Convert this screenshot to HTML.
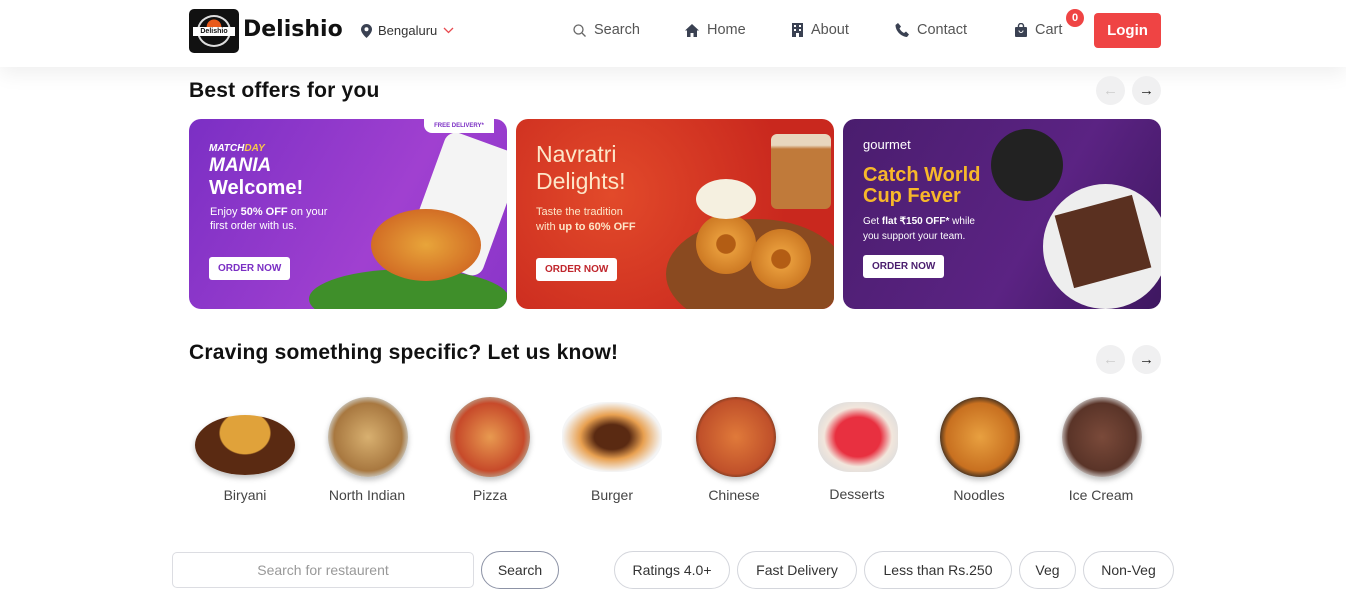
<!DOCTYPE html>
<html><head><meta charset="utf-8"><style>
*{margin:0;padding:0;box-sizing:border-box}
body{width:1346px;height:612px;overflow:hidden;background:#fff;font-family:"Liberation Sans",sans-serif;color:#111;position:relative}
.hdr{position:absolute;left:0;top:0;width:1346px;height:67px;background:#fff;box-shadow:0 6px 20px rgba(0,0,0,.07)}
.abs{position:absolute}
.nav{position:absolute;top:22px;font-size:14.5px;color:#555;display:flex;align-items:center;gap:8px}
.h2{position:absolute;font-size:21px;font-weight:bold;color:#111;letter-spacing:.2px}
.arr{position:absolute;width:29px;height:29px;border-radius:50%;background:#f0f0f1;text-align:center;line-height:29px;font-size:15px}
.ban{position:absolute;top:119px;width:318px;height:190px;border-radius:12px;overflow:hidden;color:#fff}
.btn{position:absolute;background:#fff;color:#c0262d;font-size:10px;font-weight:bold;padding:6px 9px;border-radius:3px}
.food{position:absolute;top:397px;width:80px;height:80px;border-radius:50%;box-shadow:0 3px 6px rgba(0,0,0,.25)}
.lab{position:absolute;top:487px;width:120px;text-align:center;font-size:14px;color:#444}
.pill{position:absolute;top:551px;height:38px;border:1px solid #d4d6dc;border-radius:19px;font-size:14px;color:#333;text-align:center;line-height:36px}
</style></head><body>
<div class="hdr"></div>
<div class="abs" style="left:189px;top:9px;width:50px;height:44px;background:#111;border-radius:5px"></div>
<div class="abs" style="left:197px;top:15px;width:34px;height:32px;border-radius:50%;border:2px solid #ddd;background:radial-gradient(circle at 50% 35%,#e85a1c 0 30%,#111 32%)"></div>
<div class="abs" style="left:193px;top:27px;width:42px;height:9px;background:#fff;color:#111;font-size:7px;font-weight:bold;text-align:center;line-height:9px">Delishio</div>
<div class="abs" style="left:243px;top:17px;font-size:22px;font-weight:bold;color:#111;font-family:'DejaVu Sans',sans-serif">Delishio</div>
<svg class="abs" style="left:361px;top:24px" width="11" height="14" viewBox="0 0 11 14"><path d="M5.5 0C2.5 0 0 2.4 0 5.4 0 9.3 5.5 14 5.5 14S11 9.3 11 5.4C11 2.4 8.5 0 5.5 0z" fill="#3a4152"/><circle cx="5.5" cy="5.3" r="2" fill="#fff"/></svg>
<div class="abs" style="left:378px;top:23px;font-size:13px;color:#333">Bengaluru</div>
<svg class="abs" style="left:443px;top:27px" width="11" height="7"><path d="M1 1l4.5 4.5L10 1" stroke="#e84a4f" fill="none" stroke-width="1.3"/></svg>
<div class="nav" style="left:573px"><svg width="13" height="13"><circle cx="5.5" cy="5.5" r="4.5" stroke="#666" fill="none" stroke-width="1.3"/><path d="M9 9l3.5 3.5" stroke="#666" stroke-width="1.3"/></svg>Search</div>
<div class="nav" style="left:685px"><svg width="14" height="13"><path d="M7 0L0 6.5h2V13h3.5V9h3v4H12V6.5h2z" fill="#3a4152"/></svg>Home</div>
<div class="nav" style="left:792px"><svg width="11" height="14"><rect x="0" y="0" width="11" height="14" fill="#3a4152"/><rect x="2" y="2" width="2" height="2" fill="#fff"/><rect x="7" y="2" width="2" height="2" fill="#fff"/><rect x="2" y="6" width="2" height="2" fill="#fff"/><rect x="7" y="6" width="2" height="2" fill="#fff"/><rect x="4" y="10" width="3" height="4" fill="#fff"/></svg>About</div>
<div class="nav" style="left:895px"><svg width="14" height="14"><path d="M3 0l3 3.5-1.5 2c1 2 2.5 3.5 4.5 4.5l2-1.5 3 3-2 2.5C6 13.5.5 8 .5 2z" fill="#3a4152"/></svg>Contact</div>
<div class="nav" style="left:1015px"><svg width="12" height="14"><path d="M3.5 4V3a2.5 2.5 0 015 0v1" stroke="#3a4152" fill="none" stroke-width="1.4"/><rect x="0" y="4" width="12" height="10" rx="1" fill="#3a4152"/><path d="M4 7.5a2 2 0 004 0" stroke="#fff" fill="none"/></svg>Cart</div>
<div class="abs" style="left:1066px;top:9px;width:18px;height:18px;border-radius:50%;background:#ef4444;color:#fff;font-size:11px;font-weight:bold;text-align:center;line-height:18px">0</div>
<div class="abs" style="left:1094px;top:13px;width:67px;height:35px;border-radius:4px;background:#ef4444;color:#fff;font-size:15px;font-weight:bold;text-align:center;line-height:35px">Login</div>

<div class="h2" style="left:189px;top:79px">Best offers for you</div>
<div class="arr" style="left:1096px;top:76px;color:#ccc">←</div>
<div class="arr" style="left:1132px;top:76px;color:#222">→</div>

<div class="ban" style="left:189px;background:linear-gradient(120deg,#7b2fc4,#a040d0 60%,#8a35c9)">
 <div class="abs" style="left:20px;top:18px;font-size:19px;font-weight:bold;font-style:italic;line-height:17px"><span style="font-size:10px">MATCH<span style="color:#f7c948">DAY</span></span><br>MANIA</div>
 <div class="abs" style="left:20px;top:58px;font-size:20px;font-weight:bold">Welcome!</div>
 <div class="abs" style="left:21px;top:86px;font-size:11px;line-height:14px">Enjoy <b>50% OFF</b> on your<br>first order with us.</div>
 <div class="btn" style="left:20px;top:138px;color:#7b2fc4">ORDER NOW</div>
 <div class="abs" style="left:120px;top:150px;width:200px;height:60px;border-radius:50%;background:#3f8f2a"></div>
 <div class="abs" style="left:235px;top:20px;width:80px;height:130px;border-radius:12px;background:#f4f4f4;transform:rotate(20deg)"></div>
 <div class="abs" style="left:182px;top:90px;width:110px;height:72px;border-radius:50%;background:radial-gradient(#e8a53a,#c9561c)"></div>
 <div class="abs" style="left:235px;top:0;width:70px;height:14px;background:#fff;color:#7b2fc4;font-size:6px;font-weight:bold;border-radius:0 0 0 8px;text-align:center;line-height:14px">FREE DELIVERY*</div>
</div>
<div class="ban" style="left:516px;background:radial-gradient(circle at 30% 40%,#e24a2a,#c9281e 70%)">
 <div class="abs" style="left:20px;top:22px;font-size:23px;line-height:27px;color:#fde6c8">Navratri<br>Delights!</div>
 <div class="abs" style="left:20px;top:86px;font-size:11px;line-height:15px;color:#fde6c8">Taste the tradition<br>with <b>up to 60% OFF</b></div>
 <div class="btn" style="left:20px;top:139px">ORDER NOW</div>
 <div class="abs" style="left:150px;top:100px;width:180px;height:110px;border-radius:50%;background:#8a4a20"></div>
 <div class="abs" style="left:180px;top:95px;width:60px;height:60px;border-radius:50%;background:radial-gradient(circle,#b35d14 22%,#e69a3a 24%,#c8731f 80%)"></div>
 <div class="abs" style="left:235px;top:110px;width:60px;height:60px;border-radius:50%;background:radial-gradient(circle,#b35d14 22%,#e69a3a 24%,#c8731f 80%)"></div>
 <div class="abs" style="left:180px;top:60px;width:60px;height:40px;border-radius:50%;background:#f5f0e0"></div>
 <div class="abs" style="left:255px;top:15px;width:60px;height:75px;border-radius:6px;background:linear-gradient(#e8d6bd 0 15%,#c07a3a 20%)"></div>
</div>
<div class="ban" style="left:843px;background:linear-gradient(120deg,#4a1d6e,#5b2383 60%,#3e1760)">
 <div class="abs" style="left:20px;top:18px;font-size:13px">gourmet</div>
 <div class="abs" style="left:20px;top:46px;font-size:20px;font-weight:bold;line-height:21px;color:#f7b82a">Catch World<br>Cup Fever</div>
 <div class="abs" style="left:20px;top:95px;font-size:10px;line-height:15px">Get <b>flat ₹150 OFF*</b> while<br>you support your team.</div>
 <div class="btn" style="left:20px;top:136px;color:#4a1d6e">ORDER NOW</div>
 <div class="abs" style="left:148px;top:10px;width:72px;height:72px;border-radius:50%;background:#222"></div>
 <div class="abs" style="left:200px;top:65px;width:125px;height:125px;border-radius:50%;background:#eee"></div>
 <div class="abs" style="left:220px;top:85px;width:80px;height:75px;background:#5a3020;transform:rotate(-15deg)"></div>
</div>

<div class="h2" style="left:189px;top:341px">Craving something specific? Let us know!</div>
<div class="arr" style="left:1096px;top:345px;color:#ccc">←</div>
<div class="arr" style="left:1132px;top:345px;color:#222">→</div>

<div class="food" style="left:195px;top:415px;width:100px;height:60px;background:radial-gradient(ellipse at 50% 30%,#e0a23a 35%,#5a2a12 37%)"></div>
<div class="food" style="left:328px;background:radial-gradient(#d8b070,#a87840 60%,#c9c4b8 72%)"></div>
<div class="food" style="left:450px;background:radial-gradient(#e89a50,#c74a2a 60%,#b8a690 75%)"></div>
<div class="food" style="left:562px;top:402px;width:100px;height:70px;border-radius:45%;background:radial-gradient(ellipse,#5a2a12 25%,#e8a050 45%,#f4f4f4 70%);box-shadow:none"></div>
<div class="food" style="left:696px;background:radial-gradient(#e07a3a,#c0502a 65%,#4a2a1a 78%)"></div>
<div class="food" style="left:818px;top:402px;width:80px;height:70px;border-radius:40%;background:radial-gradient(#e83040 40%,#f2e6dc 60%,#ddd 80%);box-shadow:none"></div>
<div class="food" style="left:940px;background:radial-gradient(#e8a040,#c87020 60%,#222 75%)"></div>
<div class="food" style="left:1062px;background:radial-gradient(#7a4a3a,#5a3428 60%,#ddd 75%)"></div>
<div class="lab" style="left:185px">Biryani</div>
<div class="lab" style="left:307px">North Indian</div>
<div class="lab" style="left:430px">Pizza</div>
<div class="lab" style="left:552px">Burger</div>
<div class="lab" style="left:674px">Chinese</div>
<div class="lab" style="left:797px;top:486px">Desserts</div>
<div class="lab" style="left:919px">Noodles</div>
<div class="lab" style="left:1041px">Ice Cream</div>

<div class="abs" style="left:172px;top:552px;width:302px;height:36px;border:1px solid #dcdde2;border-radius:5px;font-size:14px;color:#999;text-align:center;line-height:34px">Search for restaurent</div>
<div class="pill" style="left:481px;width:78px;border-color:#8d93a6">Search</div>
<div class="pill" style="left:614px;width:116px">Ratings 4.0+</div>
<div class="pill" style="left:737px;width:120px">Fast Delivery</div>
<div class="pill" style="left:864px;width:148px">Less than Rs.250</div>
<div class="pill" style="left:1019px;width:57px">Veg</div>
<div class="pill" style="left:1083px;width:91px">Non-Veg</div>
</body></html>
